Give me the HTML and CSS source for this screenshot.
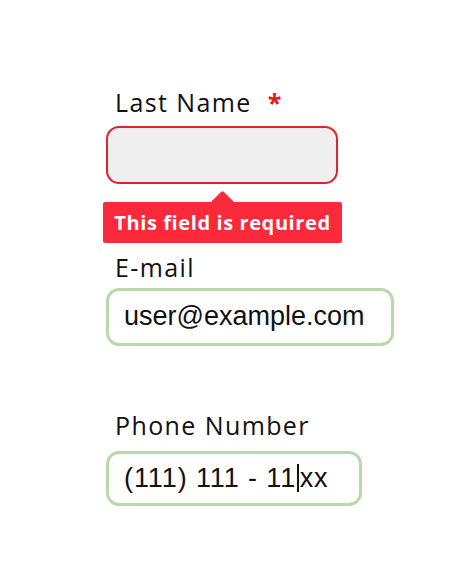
FILE: index.html
```html
<!DOCTYPE html>
<html lang="en">
<head>
<meta charset="utf-8">
<title>Form</title>
<link rel="stylesheet" href="styles.css">
</head>
<body>
<form class="form">
  <div class="field field-name">
    <label class="label">Last Name <span class="req">*</span></label>
    <div class="input input-error"></div>
    <div class="tooltip">This field is required</div>
  </div>
  <div class="field field-email">
    <label class="label">E-mail</label>
    <div class="input input-ok input-email"><span class="value">user@example.com</span></div>
  </div>
  <div class="field field-phone">
    <label class="label">Phone Number</label>
    <div class="input input-ok input-phone"><span class="value value-phone">(111) 111 - 11<span class="caret"></span>xx</span></div>
  </div>
</form>
</body>
</html>
```
FILE: styles.css
```css
html, body {
  margin: 0;
  padding: 0;
  background: #ffffff;
}
body {
  width: 474px;
  height: 586px;
  overflow: hidden;
}
.form {
  display: flex;
  flex-direction: column;
  padding: 87px 0 0 106px;
}
.field {
  display: flex;
  flex-direction: column;
  align-items: flex-start;
}
.label {
  display: block;
  font-family: "Open Sans", sans-serif;
  font-size: 25px;
  line-height: 30px;
  letter-spacing: 1.4px;
  color: #111;
  margin-left: 9px;
  margin-bottom: 9px;
}
.req {
  color: #e8141c;
  font-weight: 700;
  margin-left: 8px;
}
.input {
  box-sizing: border-box;
  display: flex;
  align-items: center;
  height: 58px;
  border-radius: 13px;
  background: #fff;
}
.input-error {
  width: 232px;
  border: 2px solid #e2222a;
  background: #efefef;
}
.input-ok {
  border: 3px solid #b9d8ab;
  padding-left: 15px;
}
.input-email {
  width: 288px;
  padding-bottom: 2px;
}
.input-phone {
  width: 256px;
  height: 55px;
}
.value {
  font-family: "Liberation Sans", Arial, sans-serif;
  font-size: 27px;
  color: #111;
  white-space: nowrap;
}
.value-phone {
  letter-spacing: 0.9px;
}
.caret {
  display: inline-block;
  width: 1.5px;
  height: 28px;
  margin: 0 1px 0 1px;
  background: #111;
  vertical-align: -5px;
}
.tooltip {
  position: relative;
  box-sizing: border-box;
  width: 239px;
  height: 41px;
  margin: 18px 0 0 -3px;
  background: #fb2a3a;
  border-radius: 2px;
  color: #fff;
  font-family: "Open Sans", sans-serif;
  font-weight: 700;
  font-size: 20px;
  letter-spacing: 0.6px;
  line-height: 41px;
  text-align: center;
}
.tooltip::before {
  content: "";
  position: absolute;
  left: 111px;
  top: -8px;
  width: 17px;
  height: 17px;
  background: #fb2a3a;
  border-radius: 2px;
  transform: rotate(45deg);
}
.field-email {
  margin-top: 9px;
}
.field-email .label {
  margin-bottom: 6px;
}
.field-phone {
  margin-top: 64px;
}
.field-phone .label {
  margin-bottom: 11px;
}
```
